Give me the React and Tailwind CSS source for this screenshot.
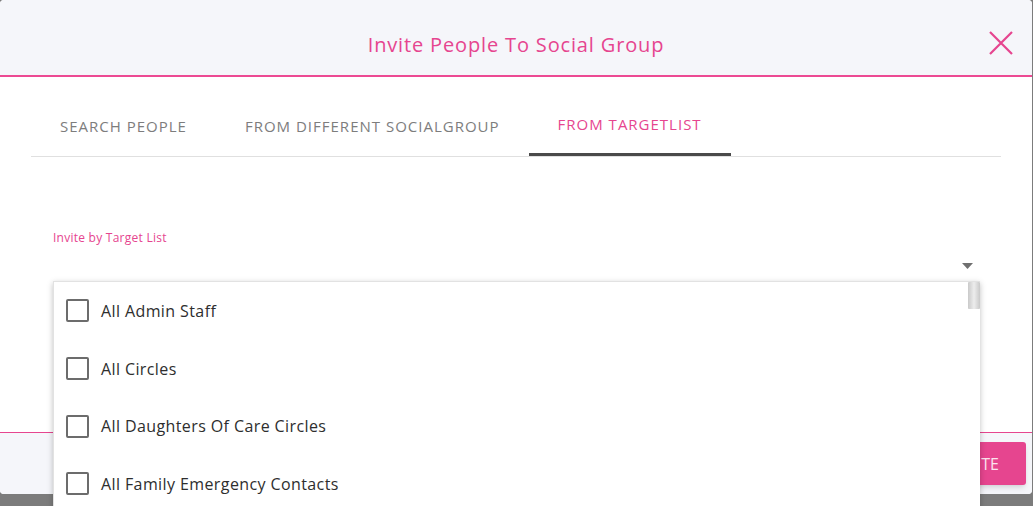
const tabs = [
  { label: 'SEARCH PEOPLE', active: false },
  { label: 'FROM DIFFERENT SOCIALGROUP', active: false },
  { label: 'FROM TARGETLIST', active: true },
];

const lists = [
  'All Admin Staff',
  'All Circles',
  'All Daughters Of Care Circles',
  'All Family Emergency Contacts',
];

export default function App() {
  return (
    <div
      className="relative h-[506px] w-[1033px] overflow-hidden bg-[#7c7c7c]"
      style={{ fontFamily: '"Open Sans", "Noto Sans", sans-serif' }}
    >
      <div className="flex h-[494px] w-[1032px] flex-col overflow-hidden rounded-[4px] bg-white">
        <header className="relative flex h-[75px] shrink-0 items-center justify-center bg-[#f5f6fa]">
          <h2 className="pt-[14px] text-[20px] tracking-[0.85px] text-[#e6458f]">Invite People To Social Group</h2>
          <button className="absolute right-[18px] top-[30px] text-[#e6458f]">
            <svg width="26" height="26" viewBox="0 0 26 26" fill="none" stroke="currentColor" strokeWidth="2.2">
              <path d="M2 2 L24 24 M24 2 L2 24" />
            </svg>
          </button>
        </header>
        <div className="h-[1.5px] shrink-0 bg-[#ec4a93]" />

        <div className="flex-1 px-[31px] pt-[20px]">
          <div className="flex border-b border-[#e0e0e0]">
            {tabs.map((t) => (
              <div
                key={t.label}
                className={`flex h-[59px] items-center px-[29px] text-[15px] tracking-[1px] ${
                  t.active ? 'border-b-[3px] border-[#4a4a4a] text-[#e6458f]' : 'text-[#7d7d7d]'
                }`}
              >
                {t.label}
              </div>
            ))}
          </div>

          <div className="pl-[22px] pr-[25px] pt-[72px]">
            <div className="text-[12px] tracking-[0.25px] text-[#e6458f]">Invite by Target List</div>
            <div className="flex h-[36px] items-center justify-end pr-[3px] pt-[2px]">
              <svg width="11" height="6" viewBox="0 0 11 6">
                <path d="M0 0 L11 0 L5.5 6 Z" fill="#707070" />
              </svg>
            </div>
          </div>
        </div>

        <div className="h-px shrink-0 bg-[#e6458f]" />
        <footer className="flex h-[61px] shrink-0 items-center justify-end bg-[#f5f6fa] pr-[6px]">
          <button className="h-[43px] rounded-[3px] bg-[#e6458f] px-[27px] text-[16px] text-[#fbe3ee] shadow-md">
            INVITE
          </button>
        </footer>
      </div>

      <div className="absolute left-[53px] top-[281px] flex h-[240px] w-[927px] border-l border-t border-[#e2e2e2] bg-white shadow-[0_2px_6px_rgba(0,0,0,0.25)]">
        <ul className="flex-1">
          {lists.map((name) => (
            <li key={name} className="flex h-[57.7px] items-center gap-[12px] pl-[12px]">
              <span className="h-[23px] w-[23px] rounded-[2px] border-2 border-[#6c6c6c]" />
              <span className="text-[16px] tracking-[0.4px] text-[#2e2e2e]">{name}</span>
            </li>
          ))}
        </ul>
        <div className="w-[12px] bg-white">
          <div className="h-[27px] w-[12px] rounded-[1px] bg-gradient-to-r from-[#c9c9c9] via-[#ededed] to-[#c9c9c9]" />
        </div>
      </div>
    </div>
  );
}
